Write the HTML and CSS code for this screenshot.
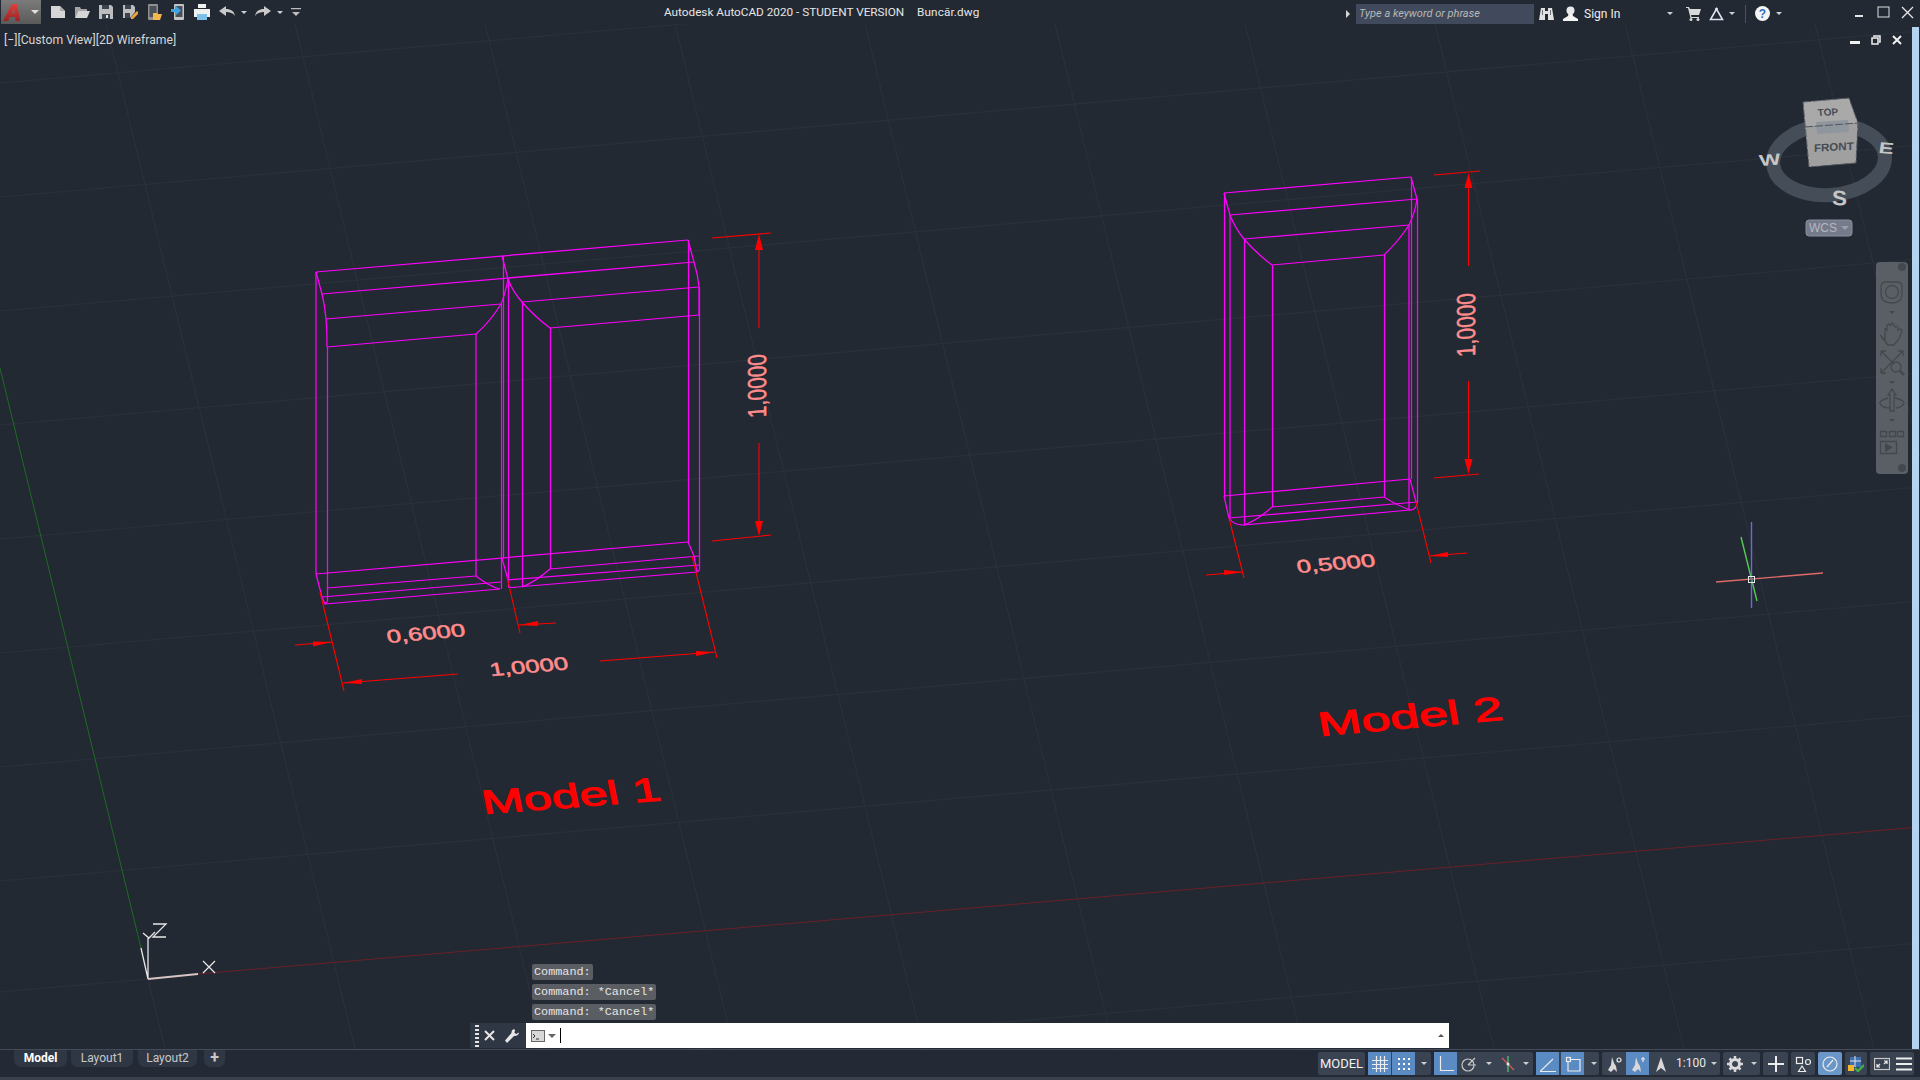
FILE: index.html
```html
<!DOCTYPE html>
<html lang="en">
  <head>
    <meta charset="UTF-8" />
    <title>Autodesk AutoCAD 2020 - STUDENT VERSION Buncăr.dwg</title>
    <link rel="stylesheet" href="styles.css">
  </head>
  <body>
    <header class="titlebar">
      <div class="qat">
        <div class="app-button">
          <svg class="logo-mark" width="20" height="18" viewBox="0 0 20 18"><defs><linearGradient id="logoRed" x1="0" y1="0" x2="0" y2="1"><stop offset="0" stop-color="#e0413c"/><stop offset="1" stop-color="#9d2221"/></linearGradient></defs><path class="logo" d="M0 18 9 1h5l3 17h-4.500l-.5-4H7l-2 4zM9 10.500h2.500L11 5z"/></svg>
          <span class="caret"></span>
        </div>
        <svg class="qat-icon" viewBox="0 0 16 16"><path fill="#d6d6d6" d="M1 2h9l5 5v7H1z"/><path fill="#a9a9a9" d="M10 2l5 5h-5z"/></svg>
        <svg class="qat-icon" viewBox="0 0 16 16"><path fill="#a4a4a4" d="M1 3h5l1 2h6v2H4l-3 7z"/><path fill="#d6d6d6" d="M4 7h12l-3 7H1z"/></svg>
        <svg class="qat-icon" viewBox="0 0 16 16"><path fill="#bdbdbd" d="M1 1h12l2 2v12H1z"/><path fill="#3b4350" d="M4 1h7v4H4zM4 10h8v5H4z"/><path fill="#e6e6e6" d="M8 11h2v3H8z"/></svg>
        <svg class="qat-icon" viewBox="0 0 16 16"><path fill="#bdbdbd" d="M1 1h10l2 2v5l-5 6H1z"/><path fill="#3b4350" d="M3 1h6v4H3zM3 9h5v5H3z"/><path fill="#f0a23c" d="M9 13l6-6 2 2-6 6H9z"/></svg>
        <svg class="qat-icon" viewBox="0 0 16 16"><rect x="2" y="0" width="10" height="16" rx="1" fill="#8f8f8f"/><rect x="3.500" y="2" width="7" height="11" fill="#4a4f58"/><path fill="#f2b84b" d="M7 9h4l1 1h4l-2 6H7z"/></svg>
        <svg class="qat-icon" viewBox="0 0 16 16"><rect x="4" y="0" width="10" height="16" rx="1" fill="#c4c4c4"/><rect x="5.500" y="2" width="7" height="11" fill="#4a4f58"/><path fill="#3fa2e0" d="M1 5h5V2l5 4.500-5 4.500V8H1z"/></svg>
        <svg class="qat-icon" viewBox="0 0 16 16"><path fill="#f0f0f0" d="M4 0h8v4H4zM0 5h16v8h-3v-2H3v2H0z"/><rect x="3" y="10" width="10" height="6" fill="#7fc0ea"/></svg>
        <svg class="qat-icon undo" viewBox="0 0 16 16"><path fill="#c9c9c9" d="M0 7l7-5v3c5 0 8 2 9 7-2-3-5-4-9-4v4z"/></svg>
        <span class="qat-caret"></span>
        <svg class="qat-icon redo" viewBox="0 0 16 16"><path fill="#c9c9c9" d="M16 7 9 2v3C4 5 1 7 0 12c2-3 5-4 9-4v4z"/></svg>
        <span class="qat-caret"></span>
        <svg class="qat-custom" viewBox="0 0 10 10"><path fill="#bdbdbd" d="M0 1h10v1.300H0zM1 5h8L5 9z"/></svg>
      </div>
      <div class="title">
        <span>Autodesk AutoCAD 2020 - STUDENT VERSION</span>
        <span class="filename">Buncăr.dwg</span>
      </div>
      <div class="infocenter">
        <span class="slot s16"><svg width="6" height="8" viewBox="0 0 6 8"><path fill="#d5d5d5" d="M1 0l4 4-4 4z"/></svg></span>
        <input class="search" type="text" placeholder="Type a keyword or phrase" />
        <span class="slot s24"><svg width="15" height="14" viewBox="0 0 15 14"><path fill="#e2e2e2" d="M2 1h4v3h3V1h4l2 12H9V7H6v6H0z"/><path fill="#6b7280" d="M3 3h1v5H3zM11 3h1v5h-1z"/></svg></span>
        <span class="slot s24"><svg width="15" height="15" viewBox="0 0 15 15"><circle cx="7.500" cy="4.500" r="4" fill="#e9e9e9"/><path fill="#f4f4f4" d="M5.500 8h4l.5 2 5 3v2H0v-2l5-3z"/></svg></span>
        <span class="signin">Sign In</span>
        <span class="slot s22"><span class="caret small"></span></span>
        <span class="slot s24"><svg width="15" height="14" viewBox="0 0 15 14"><path fill="#d9d9d9" d="M0 0h3l1 2h11l-2 6H5l.5 2H13v1H4.500L2 1H0z"/><circle cx="5" cy="12.500" r="1.500" fill="#d9d9d9"/><circle cx="12" cy="12.500" r="1.500" fill="#d9d9d9"/></svg></span>
        <span class="slot s22"><svg width="15" height="14" viewBox="0 0 15 14"><path fill="none" stroke="#d9e3f2" stroke-width="1.600" d="M7.500 2 1.500 12.500h12z"/><circle cx="7.500" cy="2" r="1.500" fill="#d9e3f2"/></svg></span>
        <span class="slot s10"><span class="caret small"></span></span>
        <span class="slot s16"><span class="divider"></span></span>
        <span class="slot s18"><svg width="15" height="15" viewBox="0 0 15 15"><circle cx="7.500" cy="7.500" r="7.500" fill="#f4f4f4"/><text class="help-mark" x="7.500" y="12" text-anchor="middle">?</text></svg></span>
        <span class="slot s16"><span class="caret small"></span></span>
        <span class="window-controls">
          <span class="slot s24"><svg width="10" height="12" viewBox="0 0 10 12"><path fill="#e4e4e4" d="M1 9h8v2H1z"/></svg></span>
          <span class="slot s24"><svg width="13" height="12" viewBox="0 0 13 12"><rect x="1" y="1" width="11" height="10" fill="none" stroke="#dedede"/></svg></span>
          <span class="slot s25"><svg width="13" height="13" viewBox="0 0 13 13"><path fill="none" stroke="#e8e8e8" stroke-width="1.300" d="M1 1l11 11M12 1 1 12"/></svg></span>
        </span>
      </div>
    </header>

    <main class="viewport">
      <svg class="drawing" viewBox="0 24 1920 1025">
        <g class="grid">
          <path d="M0 83 L960 0M0 197L1920 31M0 311L1920 145M0 425L1920 259M0 539L1920 373M0 653L1920 487M0 767L1920 601M0 881L1920 715M0 1109L1920 943M0 992L148 979"/>
          <path d="M106 24L355 1049M295 24L544 1049M485 24L734 1049M675 24L924 1049M865 24L1114 1049M1055 24L1304 1049M1245 24L1494 1049M1435 24L1684 1049M1625 24L1874 1049M1815 24L2064 1049M148 979L165 1049"/>
        </g>
        <path class="axis-x" d="M198 974L1920 827"/>
        <path class="axis-y" d="M0 368L141 948"/>

        <g class="wire">
          <path d="M316 272L688 240M322 294L694 262M326 319L501 304M522 302L699 287M327 347L476 334M550 328L699 315"/>
          <path d="M316 272L322 294Q325 306 326 319Q327 330 327 347M502 256L508 279M508 279Q505 295 501 304Q490 322 476 334M508 279Q513 292 522 302Q534 316 550 328M688 240L694 262Q698 275 699 287L699 315"/>
          <path d="M316 272V574M327.500 347V602M476 334V576M501.500 304V589M503.500 256V558M508.500 279V587M522.500 302V587M550.500 328V569M688.500 240V542M699.500 287V570"/>
          <path d="M316 574L688 542M327 588L476 576M550 569L699 556M322 597L501 582M508 580L699 565M325 604L500 589M517 587L697 572"/>
          <path d="M476 576Q490 587 500 589M550 569Q535 582 522 587M508 587Q512 588 517 587M316 574L322 597L325 604L327 602M688 542L694 556L697 572Q699 571 699 570M502 558L508 580"/>
        </g>
        <g class="wire">
          <path d="M1224 193L1411 177M1230 215L1417 199M1244 239L1409 225M1272 265L1384 255"/>
          <path d="M1224 193L1230 215Q1235 228 1244 239Q1256 253 1272 265M1411 177L1417 199Q1415 213 1409 225Q1398 242 1384 255"/>
          <path d="M1224.500 193V496M1230 215V518M1244.500 239V525M1272.500 265V507M1384.500 255V497M1409 225V509M1411.500 177V479M1417.500 199V503"/>
          <path d="M1224 496L1410 479M1272 507L1384 497M1229 518L1417 502M1244 525L1410 510"/>
          <path d="M1272 507Q1258 520 1244 525M1384 497Q1396 505 1410 510Q1416 510 1417 503M1229 518Q1233 525 1244 525M1224 496L1229 518M1410 479L1416 502"/>
        </g>

        <g class="dim">
          <path d="M320 592L344 691M507 577L520 633M692 556L717 658M295 645L332 642M556 623L519 625M343 683L458 674M600 661L715 652M712 238L771 233M712 541L771 535M759 250V328M759 443V521"/>
          <path d="M1229 518L1244 578M1416 502L1431 563M1206 575L1243 572M1467 553L1429 556M1434 175L1480 171M1434 478L1479 474M1468.500 188V266M1468.500 381V459"/>
        </g>
        <g class="arrow">
          <path d="M332 642L313 641.500L313 646.500zM519 625L538 621L538 626zM343 683L362 679L362 684zM715 652L696 651L696 656z"/>
          <path d="M759 234L755 250H763zM759 536L755 521H763z"/>
          <path d="M1243 572L1224 570L1224 575zM1429 556L1448 552L1448 557zM1468.500 173L1464.500 188H1472.500zM1468.500 474L1464.500 459H1472.500z"/>
        </g>

        <text class="dim-text" transform="matrix(1.420,-0.125,0.200,1,388,643)">0,6000</text>
        <text class="dim-text" transform="matrix(1.420,-0.120,0.200,1,491,676)">1,0000</text>
        <text class="dim-text" transform="matrix(1.420,-0.120,0.200,1,1298,573)">0,5000</text>
        <text class="dim-text tall" transform="matrix(0,-0.800,1,-0.087,766,417)">1,0000</text>
        <text class="dim-text tall" transform="matrix(0,-0.800,1,-0.087,1475,356)">1,0000</text>
        <text class="label" transform="matrix(1.520,-0.115,0.200,1,484,814)">Model 1</text>
        <text class="label" transform="matrix(1.570,-0.140,0.180,1,1320,736)">Model 2</text>

        <g class="ucs">
          <path d="M148 979V938M143 933L149 938L155 932M153 924H166L153 937H166M203 961L215 973M215 961L203 973M148 979L141 948"/>
          <path class="ucs-x" d="M148 979L198 974"/>
        </g>

        <g class="crosshair">
          <path class="hair-x" d="M1716 582L1823 573"/>
          <path class="hair-y" d="M1741 537L1757 601"/>
          <path class="hair-z" d="M1751.500 522V608"/>
          <rect x="1748.500" y="576.500" width="6" height="6"/>
        </g>
      </svg>

      <div class="view-label">[−][Custom View][2D Wireframe]</div>

      <div class="drawing-controls">
        <svg width="10" height="10" viewBox="0 0 10 10"><path fill="#f0f0f0" d="M0 6h10v3H0z"/></svg>
        <svg width="10" height="10" viewBox="0 0 10 10"><path fill="none" stroke="#f0f0f0" stroke-width="1.500" d="M3 2V1h6v6H8M1 3h6v6H1z"/></svg>
        <svg width="10" height="10" viewBox="0 0 10 10"><path fill="none" stroke="#f0f0f0" stroke-width="2" d="M1 1l8 8M9 1 1 9"/></svg>
      </div>

      <svg class="viewcube" viewBox="1745 90 165 155">
        <ellipse class="ring" cx="1829" cy="160" rx="56" ry="35" transform="rotate(-4 1829 160)"/>
        <path class="cube-top" d="M1803 102L1849 98L1858 123L1805 127z"/>
        <path class="cube-front" d="M1805 127L1858 123L1856 163L1809 167z"/>
        <path class="cube-patch" d="M1816 122L1848 120L1849 132L1817 134z"/>
        <path class="cube-edge" d="M1803 102L1849 98L1858 123L1856 163L1809 167L1803 102M1805 127L1858 123"/>
        <text class="cube-text" transform="matrix(1,-0.040,0.100,1,1818,116)">TOP</text>
        <text class="cube-text" transform="matrix(1.050,-0.060,0,1,1814,152)">FRONT</text>
        <text class="compass" transform="matrix(1.500,-0.120,0.150,1.050,1760,166)">W</text>
        <text class="compass" transform="matrix(1.500,0.120,-0.150,1.050,1878,153)">E</text>
        <text class="compass" transform="matrix(1.500,0.060,0,1.400,1832,205)">S</text>
        <rect class="wcs-box" x="1806" y="220" width="46" height="16" rx="3"/>
        <text class="wcs-text" x="1809" y="232">WCS</text>
        <path class="wcs-caret" d="M1841 226h8l-4 4z"/>
      </svg>

      <div class="navbar">
        <svg width="32" height="212" viewBox="1876 262 32 212">
          <g class="nav-icons">
            <circle class="nav-fill" cx="1902" cy="267" r="4"/>
            <path class="nav-line" d="M1881 287Q1881 282 1886 282H1897Q1902 282 1902 287V294Q1902 303 1892 303Q1881 303 1881 294z"/>
            <circle class="nav-line" cx="1892" cy="292" r="6.500"/>
            <path class="nav-fill" d="M1889 311h6l-3 3z"/>
            <path class="nav-line" d="M1880 335L1885 340V330Q1885 327 1887 330V326Q1889 322 1891 326V324Q1893 322 1894 325L1895 327Q1897 325 1898 328V330Q1901 328 1902 331L1899 339L1894 345H1888z"/>
            <path class="nav-line" d="M1881 351L1894 364M1881 373L1903 351M1881 351V356M1881 351H1886M1881 373V368M1881 373H1886M1903 351H1898M1903 351V356"/>
            <circle class="nav-line" cx="1896" cy="367" r="5"/>
            <path class="nav-line thick" d="M1900 371L1904 375"/>
            <path class="nav-fill" d="M1889 381h6l-3 3z"/>
            <path class="nav-line" d="M1892 389l-4 6h2v16h4v-16h2zM1888 398Q1877 401 1881 405Q1884 408 1890 408M1895 398Q1907 401 1903 405Q1900 408 1896 408"/>
            <path class="nav-fill" d="M1889 419h6l-3 3z"/>
            <path class="nav-line" d="M1880.500 431.500h6v5h-6zM1889.500 431.500h6v5h-6zM1897.500 431.500h6v5h-6zM1880.500 441.500h16v12h-16z"/>
            <path class="nav-fill" d="M1885 443l8 4.500-8 4.500z"/>
            <circle class="nav-fill" cx="1902" cy="468" r="4"/>
          </g>
        </svg>
      </div>

      <div class="scrollbar"></div>

      <section class="command">
        <div class="history">
          <span>Command:</span>
          <span>Command: *Cancel*</span>
          <span>Command: *Cancel*</span>
        </div>
        <div class="command-bar">
          <div class="command-tools">
            <span class="grip"></span>
            <svg width="11" height="11" viewBox="0 0 11 11"><path fill="none" stroke="#e6e6e6" stroke-width="2" d="M1 1l9 9M10 1 1 10"/></svg>
            <svg class="wrench" width="14" height="14" viewBox="0 0 14 14"><path fill="#e6e6e6" d="M9 0q-3 1-2.500 4L0 11.500 2 14l7-7q3 .5 5-2.500l-.5-1-2 1.500-2-1L10 1z"/></svg>
          </div>
          <div class="command-input">
            <svg width="14" height="12" viewBox="0 0 14 12"><rect x=".5" y=".5" width="13" height="11" fill="#d8d8d8" stroke="#666"/><path fill="none" stroke="#333" d="M2 4l2 2-2 2M5 9h3"/></svg>
            <span class="caret tiny"></span>
            <span class="text-cursor"></span>
            <span class="recent"></span>
          </div>
        </div>
      </section>
    </main>

    <footer class="bottombar">
      <nav class="tabs">
        <span class="tab model">Model</span>
        <span class="tab layout1">Layout1</span>
        <span class="tab layout2">Layout2</span>
        <span class="tab add">+</span>
      </nav>
      <div class="status">
        <div class="sb-group model-label">MODEL</div>
        <div class="sb-group g2">
          <span class="btn on"><svg viewBox="0 0 16 16"><path class="st" d="M4.500 0v16M8.500 0v16M12.500 0v16M0 4.500h16M0 8.500h16M0 12.500h16"/></svg></span>
          <span class="btn on"><svg viewBox="0 0 16 16"><path class="dots" d="M3 3h.01M8 3h.01M13 3h.01M3 8h.01M8 8h.01M13 8h.01M3 13h.01M8 13h.01M13 13h.01"/></svg></span>
          <span class="drop w15"><i class="caret small"></i></span>
        </div>
        <div class="sb-group g3">
          <span class="btn on"><svg viewBox="0 0 16 16"><path class="st" d="M2.500 0v14.500H16"/></svg></span>
          <span class="btn"><svg viewBox="0 0 16 16"><circle class="st dim-st" cx="7" cy="9" r="6"/><path class="st dim-st" d="M7 9L14 2M7 9h8"/></svg></span>
          <span class="drop w18"><i class="caret small"></i></span>
          <span class="btn w20"><svg viewBox="0 0 16 16"><path d="M2 2L14 14" stroke="#e0565b" fill="none" stroke-width="1.300"/><path d="M8 0v16" stroke="#55c46b" fill="none" stroke-width="1.300"/><circle cx="8" cy="8" r="1.500" fill="#e8e8e8"/></svg></span>
          <span class="drop w15"><i class="caret small"></i></span>
        </div>
        <div class="sb-group g4">
          <span class="btn on"><svg viewBox="0 0 16 16"><path class="st" d="M0 15.500h16M0 15.500L13 3"/></svg></span>
          <span class="btn on"><svg viewBox="0 0 16 16"><path class="st" d="M4.500 3.500H15V15H3V5.500"/><rect class="st" x="1.500" y="1.500" width="4" height="4"/></svg></span>
          <span class="drop w15"><i class="caret small"></i></span>
        </div>
        <div class="sb-group g5">
          <span class="btn w24"><svg viewBox="0 0 16 16"><path class="glyph" d="M6 1l2 6 2 3 1 6-3-3-3 3-3-2 3-5z"/><circle class="st" cx="13" cy="4" r="2"/></svg></span>
          <span class="btn on"><svg viewBox="0 0 16 16"><path class="glyph" d="M6 1l2 6 2 3 1 6-3-3-3 3-3-2 3-5z"/><path class="st" d="M11 3l4 0M13 1v5"/></svg></span>
          <span class="btn w24"><svg viewBox="0 0 16 16"><path class="glyph" d="M8 1l2 6 3 9-5-4-5 4 3-9z"/></svg></span>
          <span class="scale">1:100</span>
          <span class="drop w10"><i class="caret small"></i></span>
        </div>
        <div class="sb-group g6">
          <span class="btn w24"><svg viewBox="0 0 16 16"><circle cx="8" cy="8" r="4.500" fill="none" stroke="#d9d9d9" stroke-width="3"/><path stroke="#d9d9d9" stroke-width="2.500" d="M8 0v3M8 13v3M0 8h3M13 8h3M2.500 2.500l2 2M11.500 11.500l2 2M13.500 2.500l-2 2M4.500 11.500l-2 2"/></svg></span>
          <span class="drop w13"><i class="caret small"></i></span>
        </div>
        <div class="sb-group w25"><span class="btn w25"><svg viewBox="0 0 16 16"><path class="st thick-st" d="M8 0v16M0 8h16"/></svg></span></div>
        <div class="sb-group w24"><span class="btn w24"><svg viewBox="0 0 16 16"><rect class="st" x="1.500" y="1.500" width="6" height="6"/><circle class="st" cx="13" cy="6" r="2.500"/><path class="st" d="M7 10l3.500 5.500h-7z"/></svg></span></div>
        <div class="sb-group w24 on-soft"><span class="btn w24"><svg viewBox="0 0 16 16"><circle class="st" cx="8" cy="8" r="7" stroke-width="1.500"/><path class="st" d="M5 11L11 4"/></svg></span></div>
        <div class="sb-group w22"><span class="btn w22"><svg viewBox="0 0 16 16"><rect x="2" y="1" width="11" height="10" fill="#3c6fb0"/><path d="M7 0v11M2 5h11" stroke="#e8e8e8" fill="none"/><rect x="0" y="9" width="6" height="6" fill="#f2b630"/><path d="M7 12l3 3 6-6" stroke="#43b04a" stroke-width="2.400" fill="none"/></svg></span></div>
        <div class="sb-group g7">
          <span class="btn"><svg viewBox="0 0 16 16"><rect class="st dim-st" x=".5" y="2.500" width="15" height="11"/><path class="st" d="M3 11l3-3M3 8v3h3M13 5l-3 3M13 8V5h-3"/></svg></span>
          <span class="btn w21"><svg viewBox="0 0 16 16"><path class="st thick-st" d="M0 2.500h16M0 8h16M0 13.500h16"/></svg></span>
        </div>
      </div>
    </footer>
  </body>
</html>
```

FILE: styles.css
```css
* {
  box-sizing: border-box;
}

html,
body {
  height: 100%;
}

body {
  margin: 0;
  display: flex;
  flex-direction: column;
  height: 100vh;
  overflow: hidden;
  background: #222932;
  color: #e4e4e4;
  font-family: Roboto, "Liberation Sans", sans-serif;
  font-size: 12px;
}

.caret {
  display: inline-block;
  width: 0;
  height: 0;
  border-left: 4px solid transparent;
  border-right: 4px solid transparent;
  border-top: 4px solid #e0e0e0;
}

.caret.small {
  border-left-width: 3px;
  border-right-width: 3px;
  border-top-width: 3px;
  border-top-color: #cfcfcf;
}

.caret.tiny {
  border-left-width: 4px;
  border-right-width: 4px;
  border-top: 4px solid #666;
}

/* title bar */
.titlebar {
  display: flex;
  align-items: center;
  height: 24px;
  flex: none;
}

.qat {
  display: flex;
  align-items: center;
  width: 664px;
  height: 100%;
  padding-left: 1px;
}

.app-button {
  display: flex;
  align-items: center;
  width: 40px;
  height: 24px;
  margin-right: 9px;
  padding-left: 2px;
  background: linear-gradient(#7b7b7b, #5a5a5a);
}

.logo-mark {
  margin-right: 8px;
}

.logo {
  fill: url(#logoRed);
  fill-rule: evenodd;
}

.qat-icon {
  width: 16px;
  height: 16px;
  margin-right: 8px;
}

.qat-icon.undo {
  margin-left: 1px;
}

.qat-icon.redo {
  margin-left: 8px;
}

.qat-caret {
  width: 0;
  height: 0;
  margin-left: -2px;
  margin-right: 0;
  border-left: 3px solid transparent;
  border-right: 3px solid transparent;
  border-top: 3px solid #cfcfcf;
}

.qat-custom {
  width: 10px;
  height: 10px;
  margin-left: 8px;
}

.title {
  flex: 1;
  white-space: nowrap;
  color: #e6e6e6;
  font-size: 11.750px;
}

.filename {
  margin-left: 10px;
  letter-spacing: 0.100px;
}

.infocenter {
  display: flex;
  align-items: center;
  width: 580px;
  height: 100%;
  padding-top: 3px;
}

.slot {
  display: flex;
  align-items: center;
  justify-content: center;
  height: 100%;
  flex: none;
}

.s10 { width: 10px; }
.s16 { width: 16px; }
.s18 { width: 18px; }
.s22 { width: 22px; }
.s24 { width: 24px; }
.s25 { width: 25px; }

.search {
  width: 178px;
  height: 20px;
  padding: 0 3px;
  border: none;
  background: #404a5c;
  color: #b8b8b8;
  font: italic 11px Roboto, sans-serif;
}

.search::placeholder {
  color: #b8b8b8;
  opacity: 1;
}

.signin {
  width: 77px;
  padding-left: 2px;
  color: #eeeeee;
}

.divider {
  width: 1px;
  height: 18px;
  background: #4a525f;
}

.help-mark {
  fill: #2f6cc4;
  font: bold 12px "Liberation Sans", sans-serif;
}

.window-controls {
  display: flex;
  height: 100%;
  margin-top: -3px;
  margin-left: auto;
}

/* model space */
.viewport {
  position: relative;
  flex: 1;
  min-height: 0;
}

.drawing {
  position: absolute;
  inset: 0;
  width: 100%;
  height: 100%;
}

.drawing path {
  fill: none;
}

.grid path {
  stroke: #2b323d;
  stroke-width: 1;
}

.axis-x {
  stroke: #6a2029;
}

.axis-y {
  stroke: #1f6a25;
}

.wire path {
  stroke: #ff00ff;
  stroke-width: 1.250;
}

.dim path {
  stroke: #ff0000;
  stroke-width: 1.100;
}

.drawing .arrow path {
  fill: #ff0000;
}

.dim-text {
  fill: #ff8c8c;
  stroke: #ff8c8c;
  stroke-width: 0.550;
  font-family: "Liberation Sans", sans-serif;
  font-size: 18px;
}

.dim-text.tall {
  font-size: 26px;
}

.label {
  fill: #ff0000;
  stroke: #ff0000;
  stroke-width: 1;
  font-family: "Liberation Sans", sans-serif;
  font-size: 33px;
}

.ucs path {
  stroke: #e6e6e6;
  stroke-width: 1.300;
}

.ucs .ucs-x {
  stroke: #d8c4c4;
  stroke-width: 1.800;
}

.crosshair path {
  stroke-width: 1.400;
}

.hair-x {
  stroke: #e06a6a;
}

.hair-y {
  stroke: #58c858;
}

.hair-z {
  stroke: #6a6ae0;
}

.crosshair rect {
  fill: none;
  stroke: #e8e8e8;
}

.view-label {
  position: absolute;
  top: 8px;
  left: 4px;
  color: #d6d6d6;
  font-size: 12.200px;
  line-height: 16px;
  white-space: nowrap;
}

.drawing-controls {
  position: absolute;
  top: 11px;
  left: 1850px;
  display: flex;
  gap: 11px;
}

.viewcube {
  position: absolute;
  top: 66px;
  left: 1745px;
  width: 165px;
  height: 155px;
}

.ring {
  fill: none;
  stroke: #454d58;
  stroke-width: 14;
}

.cube-top {
  fill: #a9a9a9;
}

.cube-front {
  fill: #a0a0a0;
}

.cube-patch {
  fill: #8f969e;
}

.cube-edge {
  fill: none;
  stroke: #50565e;
  stroke-dasharray: 8 2;
}

.cube-text {
  fill: #464c54;
  font: bold 10px "Liberation Sans", sans-serif;
}

.cube-text + .cube-text {
  font-size: 11px;
}

.compass {
  fill: #c6c6c6;
  font: bold 15px "Liberation Sans", sans-serif;
}

.wcs-box {
  fill: #767b8b;
  stroke: #8a8fa0;
}

.wcs-text {
  fill: #b4b7c2;
  font: 12px "Liberation Sans", sans-serif;
}

.wcs-caret {
  fill: #99a0ae;
}

.navbar {
  position: absolute;
  top: 238px;
  left: 1876px;
  width: 32px;
  height: 212px;
  border-radius: 4px;
  background: #5a5f66;
}

.nav-line {
  fill: none;
  stroke: #44484e;
  stroke-width: 1.300;
}

.nav-line.thick {
  stroke-width: 2.500;
}

.nav-fill {
  fill: #44484e;
}

.scrollbar {
  position: absolute;
  top: 3px;
  bottom: 0;
  left: 1912px;
  width: 7px;
  background: #b4d3ef;
}

/* command line */
.command {
  position: absolute;
  bottom: 1px;
  left: 470px;
  width: 979px;
}

.history {
  display: flex;
  flex-direction: column;
  align-items: flex-start;
  gap: 4px;
  margin-bottom: 3px;
  padding-left: 62px;
}

.history span {
  padding: 0 2px;
  height: 16px;
  line-height: 16px;
  border-radius: 2px;
  background: #5a5d62;
  color: #e6e6e6;
  font-family: "Liberation Mono", monospace;
  font-size: 11.800px;
  white-space: pre;
}

.command-bar {
  display: flex;
  height: 25px;
}

.command-tools {
  display: flex;
  align-items: center;
  gap: 5px;
  width: 56px;
  padding-left: 5px;
  background: #2f3744;
}

.wrench {
  margin-left: 5px;
}

.grip {
  width: 4px;
  height: 22px;
  background: repeating-linear-gradient(#e4e4e4 0 2px, transparent 2px 4px);
}

.command-input {
  display: flex;
  align-items: center;
  flex: 1;
  gap: 3px;
  padding-left: 5px;
  background: #ffffff;
}

.text-cursor {
  width: 1px;
  height: 15px;
  margin-left: 1px;
  background: #000000;
}

.recent {
  width: 0;
  height: 0;
  margin-left: auto;
  margin-right: 5px;
  border-left: 3px solid transparent;
  border-right: 3px solid transparent;
  border-bottom: 3px solid #555;
}

/* tabs and status bar */
.bottombar {
  display: flex;
  align-items: flex-start;
  justify-content: space-between;
  flex: none;
  height: 31px;
  border-top: 1px solid #454c59;
  border-bottom: 3px solid #3a4250;
  background: #232a35;
}

.tabs {
  display: flex;
  padding-left: 14px;
}

.tab {
  height: 17px;
  line-height: 16px;
  border-radius: 0 0 7px 7px;
  background: #2f3744;
  color: #c8c8c8;
  text-align: center;
}

.tab.model {
  width: 53px;
  margin-right: 4px;
  color: #ffffff;
  font-weight: 700;
}

.tab.layout1 {
  width: 62px;
  margin-right: 5px;
}

.tab.layout2 {
  width: 59px;
  margin-right: 7px;
}

.tab.add {
  width: 21px;
  font-size: 16px;
  font-weight: 700;
}

.status {
  display: flex;
  gap: 3px;
  height: 23px;
  margin-top: 2px;
  padding-right: 6px;
}

.sb-group {
  display: flex;
  height: 23px;
  border-radius: 2px;
  background: #3a4352;
}

.model-label {
  align-items: center;
  justify-content: center;
  width: 47px;
  color: #f0f0f0;
  font-size: 13px;
}

.g2 { width: 63px; gap: 1px; }
.g3 { width: 99px; }
.g4 { width: 63px; gap: 2px; }
.g5 { width: 118px; }
.g6 { width: 37px; }
.g7 { width: 44px; }

.btn {
  display: flex;
  align-items: center;
  justify-content: center;
  flex: none;
  width: 23px;
  height: 23px;
}

.btn svg {
  width: 16px;
  height: 16px;
}

.btn.on {
  background: #5a8bc2;
}

.on-soft {
  background: #6a97c8;
}

.drop {
  display: flex;
  align-items: center;
  justify-content: center;
  flex: none;
}

.scale {
  width: 36px;
  padding-top: 4px;
  color: #e8e8e8;
  text-align: center;
}

.w10 { width: 10px; }
.w13 { width: 13px; }
.w15 { width: 15px; }
.w18 { width: 18px; }
.w20 { width: 20px; }
.w21 { width: 21px; }
.w22 { width: 22px; }
.w24 { width: 24px; }
.w25 { width: 25px; }

.st {
  fill: none;
  stroke: #ececec;
  stroke-width: 1.200;
}

.dim-st {
  stroke: #c8c8c8;
}

.thick-st {
  stroke-width: 2;
}

.dots {
  fill: none;
  stroke: #ffffff;
  stroke-width: 2;
  stroke-linecap: square;
}

.glyph {
  fill: #d8d8d8;
}
```
